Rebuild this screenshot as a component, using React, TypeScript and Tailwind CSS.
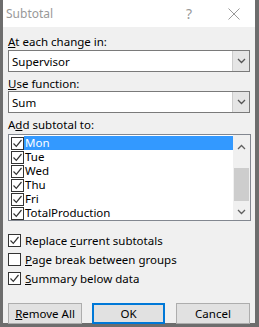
import React from 'react';

const font = { fontFamily: '"Noto Sans", "Liberation Sans", sans-serif' };

function Chevron({ dir = 'down' }: { dir?: 'down' | 'up' }) {
  return (
    <svg width="9" height="6" viewBox="0 0 9 6" fill="none" stroke="currentColor" strokeWidth="1.3">
      {dir === 'down' ? <path d="M1 1l3.5 3.5L8 1" /> : <path d="M1 5l3.5-3.5L8 5" />}
    </svg>
  );
}

function Check({ checked }: { checked: boolean }) {
  return (
    <span className="w-[13px] h-[13px] border border-[#333] bg-white flex items-center justify-center shrink-0">
      {checked && (
        <svg width="11" height="11" viewBox="0 0 11 11" fill="none" stroke="#333" strokeWidth="1.2">
          <path d="M1.5 5.5l2.8 2.8L9.5 2" />
        </svg>
      )}
    </span>
  );
}

function Combo({ value }: { value: string }) {
  return (
    <div className="h-[22px] flex border border-[#7a7a7a] bg-white">
      <div className="flex-1 px-[3px] flex items-center text-black">{value}</div>
      <div className="w-[17px] bg-[#e5e5e5] border-l border-[#cccccc] flex items-center justify-center text-[#555]">
        <Chevron />
      </div>
    </div>
  );
}

const items = ['Mon', 'Tue', 'Wed', 'Thu', 'Fri', 'TotalProduction'];

export default function App() {
  return (
    <div className="w-[259px] h-[327px] bg-[#6d6d6d] pl-[3px] pr-[4px] pb-[4px] text-black" style={font}>
      <div className="h-full flex flex-col bg-[#f0f0f0]">
        {/* Title bar */}
        <div className="h-[27px] bg-white flex items-center shrink-0">
          <span className="pl-[3px] text-[12px] text-[#999]">Subtotal</span>
          <div className="flex-1" />
          <span className="text-[14px] text-[#999] mr-[36px]">?</span>
          <svg width="12" height="12" viewBox="0 0 12 12" stroke="#999" strokeWidth="1" className="mr-[15px]">
            <path d="M0.5 0.5l11 11M11.5 0.5l-11 11" />
          </svg>
        </div>

        <div className="flex flex-col px-[5px] text-[11.5px] leading-[15px]">
          <div className="mt-[7px] h-[15px] mb-[1px]">
            <u>A</u>t each change in:
          </div>
          <Combo value="Supervisor" />

          <div className="mt-[4px] h-[15px]">
            <u>U</u>se function:
          </div>
          <Combo value="Sum" />

          <div className="mt-[4px] h-[15px] mb-[2px]">
            A<u>d</u>d subtotal to:
          </div>

          {/* List box */}
          <div className="h-[87px] border border-[#828790] bg-white flex mr-[-1px]">
            <div className="flex-1 pt-[1px] pl-[2px]">
              {items.map((it, i) => (
                <div key={it} className="h-[14px] flex items-center">
                  <Check checked />
                  <span
                    className={`flex-1 h-[14px] pl-[1px] leading-[14px] overflow-hidden ${i === 0 ? 'bg-[#3399ff] text-white' : ''}`}
                  >
                    {it}
                  </span>
                </div>
              ))}
            </div>
            <div className="w-[17px] bg-[#f0f0f0] flex flex-col items-center text-[#606060]">
              <div className="h-[17px] flex items-center justify-center mt-[3px]">
                <Chevron dir="up" />
              </div>
              <div className="w-[15px] h-[33px] bg-[#cdcdcd] mt-[13px]" />
              <div className="flex-1" />
              <div className="h-[17px] flex items-center justify-center">
                <Chevron />
              </div>
            </div>
          </div>

          {/* Options */}
          <div className="mt-[13px] flex flex-col gap-[6px]">
            <label className="flex items-center gap-[4px] h-[13px]">
              <Check checked />
              <span>
                Replace <u>c</u>urrent subtotals
              </span>
            </label>
            <label className="flex items-center gap-[4px] h-[13px]">
              <Check checked={false} />
              <span>
                <u>P</u>age break between groups
              </span>
            </label>
            <label className="flex items-center gap-[4px] h-[13px]">
              <Check checked />
              <span>
                <u>S</u>ummary below data
              </span>
            </label>
          </div>

          {/* Buttons */}
          <div className="mt-[18px] flex">
            <button className="w-[74px] h-[21px] bg-[#e1e1e1] border border-[#adadad]">
              <u>R</u>emove All
            </button>
            <button className="w-[73px] h-[21px] bg-[#e1e1e1] border-2 border-[#0078d7] ml-[10px]">
              OK
            </button>
            <button className="w-[74px] h-[21px] bg-[#e1e1e1] border border-[#adadad] ml-[11px]">
              Cancel
            </button>
          </div>
        </div>
      </div>
    </div>
  );
}
